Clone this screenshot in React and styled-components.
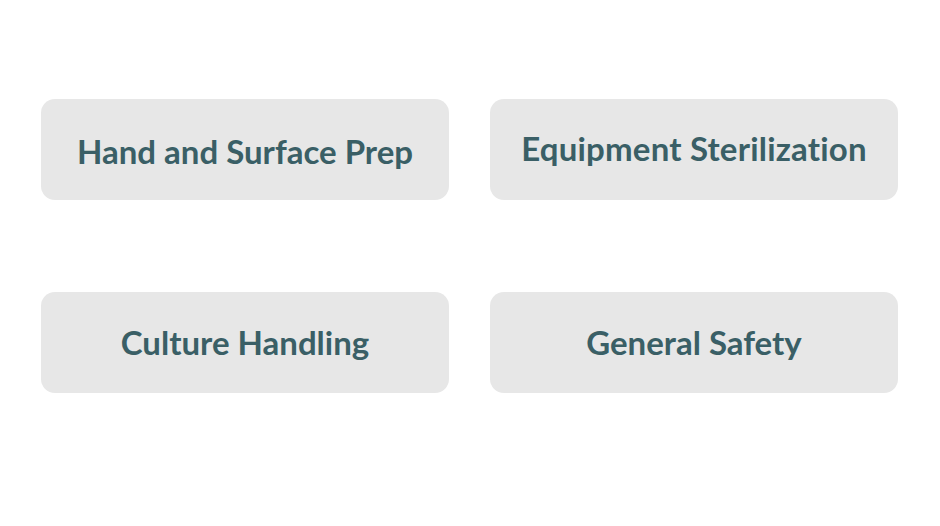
import React from 'react'
import styled, { createGlobalStyle } from 'styled-components'

const GlobalStyle = createGlobalStyle`
    html, body {
        margin : 0;
        padding : 0;
        background : #ffffff;
        font-family : Lato, "Liberation Sans", sans-serif;
    }
`

const Grid = styled.div`
    display : grid;
    grid-template-columns : 408px 408px;
    grid-auto-rows : 101px;
    column-gap : 41px;
    row-gap : 92px;
    padding : 99px 41px 0 41px;
`

const Card = styled.button`
    display : flex;
    align-items : center;
    justify-content : center;
    border : none;
    border-radius : 14px;
    background : #e7e7e7;
    cursor : pointer;
    padding : 0;
    font-family : Lato, "Liberation Sans", sans-serif;
`

const Label = styled.span`
    font-size : 33px;
    font-weight : 700;
    color : #3a5f66;
    font-variant-ligatures : none;
    font-feature-settings : "liga" 0;
    letter-spacing : ${props => props.spacing || 0}px;
    position : relative;
    top : ${props => props.shift || 0}px;
`

const topics = [
    { name : "Hand and Surface Prep", shift : 1 },
    { name : "Equipment Sterilization", shift : -2, spacing : 0.2 },
    { name : "Culture Handling", shift : -1 },
    { name : "General Safety", shift : -1 },
]

const App = () => {
    return (
        <>
            <GlobalStyle />
            <Grid>
                {topics.map(t => (
                    <Card key = {t.name}>
                        <Label shift = {t.shift} spacing = {t.spacing}>{t.name}</Label>
                    </Card>
                ))}
            </Grid>
        </>
    )
}

export default App
